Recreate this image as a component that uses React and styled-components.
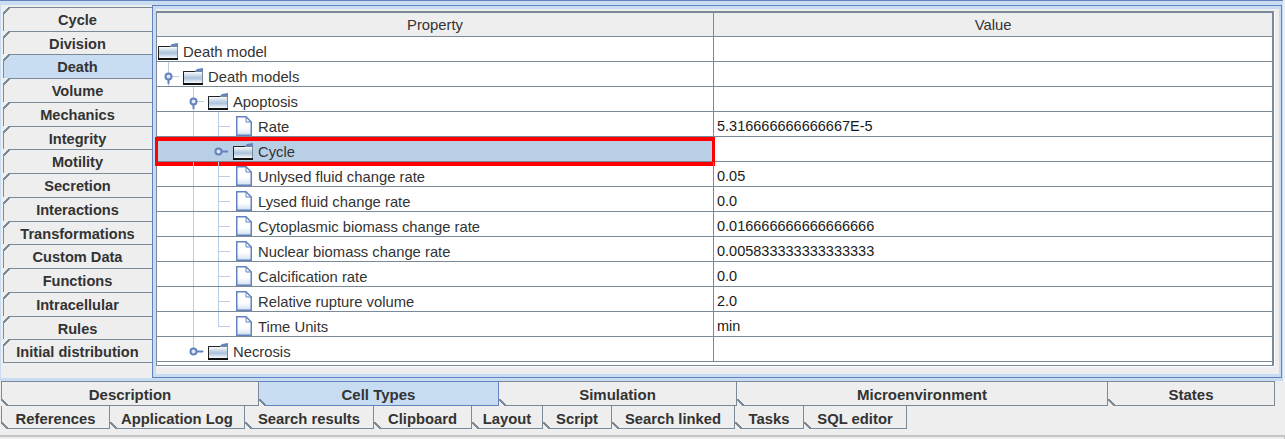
import React from 'react';
import styled, { createGlobalStyle } from 'styled-components';

const LINE = '#7a8a99';
const BLUE = '#6382bf';
const PALE = '#b8cfe5';
const TINT = '#c8ddf2';
const BG = '#eeeeee';

const GlobalStyle = createGlobalStyle`
    html, body {
        margin: 0;
        padding: 0;
        background: ${BG};
    }
    body {
        font-family: "Liberation Sans", Arial, sans-serif;
        font-size: 14.8px;
        color: #333333;
    }
`;

const Shell = styled.div`
    width: 1285px;
    height: 439px;
    overflow: hidden;
    display: flex;
    flex-direction: column;
    background: ${BG};
`;

const TopFrame = styled.div`
    box-sizing: border-box;
    width: 1283px;
    height: 381px;
    flex: none;
    padding: 4px 3px 3px 1px;
    display: flex;
    background: ${TINT};
    border-top: 1px solid ${BLUE};
`;

const SideColumn = styled.div`
    box-sizing: border-box;
    width: 151px;
    flex: none;
    padding: 2px 0 0 2px;
    background: ${BG};
`;

const SideTab = styled.div`
    box-sizing: border-box;
    position: relative;
    height: ${p => p.$height}px;
    padding-right: 1px;
    padding-top: ${p => (p.$height === 23 || p.$last ? 1 : 0)}px;
    display: flex;
    align-items: center;
    justify-content: center;
    font-size: 14.6px;
    font-weight: bold;
    border-top: 1px solid ${LINE};
    border-left: 1px solid ${LINE};
    border-bottom: ${p => (p.$last ? `1px solid ${LINE}` : 'none')};
    background: ${p => (p.$active ? TINT : BG)};

    &::before {
        content: '';
        position: absolute;
        left: -1px;
        top: -1px;
        width: 7px;
        height: 7px;
        background: linear-gradient(135deg, ${BG} 0 42%, ${LINE} 42% 58%, transparent 58%);
    }
`;

const ContentPanel = styled.div`
    box-sizing: border-box;
    flex: 1;
    display: flex;
    border: 1px solid ${BLUE};
    padding: 3px 0 3px 0;
    background: ${TINT};
`;

const ContentInner = styled.div`
    flex: 1;
    display: flex;
    padding: 2px 5px 9px 3px;
    background: linear-gradient(to right, ${TINT} 3px, ${BG} 3px);
    border-right: 2px solid ${TINT};
`;

const ScrollPane = styled.div`
    box-sizing: border-box;
    width: 1118px;
    height: 355px;
    background: #ffffff;
    border-top: 2px solid ${LINE};
    border-left: 1px solid ${LINE};
    border-right: 2px solid ${LINE};
    border-bottom: 1px solid ${LINE};
    box-shadow: 1px 1px 0 #ffffff;
`;

const HeaderRow = styled.div`
    display: grid;
    grid-template-columns: 557px 1fr;
    height: 23px;
    background: ${BG};
    border-bottom: 1px solid ${LINE};
`;

const HeaderCell = styled.div`
    display: flex;
    align-items: center;
    justify-content: center;
    font-size: 14.8px;
    border-right: ${p => (p.$first ? `1px solid ${LINE}` : 'none')};
`;

const Row = styled.div`
    display: grid;
    grid-template-columns: 557px 1fr;
    height: 24px;
    border-bottom: 1px solid ${LINE};
`;

const TreeCell = styled.div`
    position: relative;
    display: flex;
    height: 24px;
    border-right: 1px solid ${LINE};
    background: ${p => (p.$selected ? PALE : 'transparent')};
`;

const Highlight = styled.div`
    position: absolute;
    box-sizing: border-box;
    left: -2px;
    top: 0;
    width: 560px;
    height: 29px;
    border: solid #ff0000;
    border-width: 4px 3px;
`;

const Connector = styled.svg`
    display: block;
    flex: none;
`;

const NodeIcon = styled.svg`
    display: block;
    flex: none;
    margin-top: ${p => (p.$leaf ? 4 : 6)}px;
`;

const NodeLabel = styled.span`
    margin-left: ${p => (p.$leaf ? 6 : 5)}px;
    line-height: 16px;
    padding-top: 7px;
    white-space: nowrap;
`;

const ValueCell = styled.div`
    padding: 6px 0 0 3px;
    line-height: 16px;
    font-size: 14.5px;
    color: #1a1a1a;
`;

const TabRow = styled.div`
    display: flex;
    height: ${p => p.$height}px;
    padding-left: 1px;
    flex: none;
`;

const MainTab = styled.div`
    box-sizing: border-box;
    position: relative;
    width: ${p => p.$width}px;
    padding-top: 2px;
    display: flex;
    align-items: center;
    justify-content: center;
    font-size: 15px;
    font-weight: bold;
    border-top: 1px solid ${p => (p.$active ? BLUE : LINE)};
    border-bottom: 1px solid ${p => (p.$active ? BLUE : LINE)};
    border-right: 1px solid ${p => (p.$active ? BLUE : LINE)};
    border-left: ${p => (p.$first ? `1px solid ${LINE}` : 'none')};
    background: ${p => (p.$active ? TINT : BG)};

    &::before {
        content: '';
        position: absolute;
        left: ${p => (p.$first ? -1 : 0)}px;
        bottom: -1px;
        width: 7px;
        height: 7px;
        background: linear-gradient(45deg, ${BG} 0 42%, ${LINE} 42% 58%, transparent 58%);
    }
`;

const SubTab = styled(MainTab)`
    border-top: none;
    padding-top: 4px;
    font-size: 14.8px;
`;

const StatusBar = styled.div`
    margin-top: 6px;
    flex: 1;
    border-top: 2px solid #c4c4c4;
    border-right: 1px solid #c4c4c4;
`;

const sideTabs = [
    'Cycle', 'Division', 'Death', 'Volume', 'Mechanics', 'Integrity', 'Motility', 'Secretion',
    'Interactions', 'Transformations', 'Custom Data', 'Functions', 'Intracellular', 'Rules', 'Initial distribution',
];

const mainTabs = [
    { label: 'Description', width: 258 },
    { label: 'Cell Types', width: 240, active: true },
    { label: 'Simulation', width: 238 },
    { label: 'Microenvironment', width: 371 },
    { label: 'States', width: 167 },
];

const subTabs = [
    { label: 'References', width: 109 },
    { label: 'Application Log', width: 135 },
    { label: 'Search results', width: 129 },
    { label: 'Clipboard', width: 98 },
    { label: 'Layout', width: 71 },
    { label: 'Script', width: 69 },
    { label: 'Search linked', width: 123 },
    { label: 'Tasks', width: 69 },
    { label: 'SQL editor', width: 103 },
];

// lines: vertical guides as [x, y1, y2], hook: leaf connector, handle: expander
const leafRow = (label, value, last) => ({
    label,
    value,
    width: 79,
    leaf: true,
    lines: [[36, 0, 25], [61, 0, last ? 15 : 25]],
    hook: true,
});

const rows = [
    { label: 'Death model', value: '', width: 1 },
    { label: 'Death models', value: '', width: 26, lines: [[11, 0, 24]], handle: { x: 11, open: true } },
    { label: 'Apoptosis', value: '', width: 51, lines: [[36, 0, 25]], handle: { x: 36, open: true } },
    leafRow('Rate', '5.316666666666667E-5'),
    { label: 'Cycle', value: '', width: 76, lines: [[36, 0, 25], [61, 0, 25]], handle: { x: 61 }, selected: true },
    leafRow('Unlysed fluid change rate', '0.05'),
    leafRow('Lysed fluid change rate', '0.0'),
    leafRow('Cytoplasmic biomass change rate', '0.016666666666666666'),
    leafRow('Nuclear biomass change rate', '0.005833333333333333'),
    leafRow('Calcification rate', '0.0'),
    leafRow('Relative rupture volume', '2.0'),
    leafRow('Time Units', 'min', true),
    { label: 'Necrosis', value: '', width: 51, lines: [[36, 0, 15]], handle: { x: 36 } },
];

const FolderIcon = () => (
    <NodeIcon width="20" height="17" viewBox="0 0 20 17">
        <defs>
            <linearGradient id="folderFill" x1="0" y1="0" x2="0" y2="1">
                <stop offset="0" stopColor="#ffffff" />
                <stop offset="0.55" stopColor="#a9c2dc" />
                <stop offset="1" stopColor="#ffffff" />
            </linearGradient>
        </defs>
        <path d="M12 3 L14 1 L20 0 L20 3 Z" fill={BLUE} />
        <rect x="0.5" y="3.5" width="19" height="12" fill="url(#folderFill)" stroke={LINE} />
        <path d="M0.5 15.5 V3.5 H12" fill="none" stroke="#222222" />
        <rect x="0" y="15" width="20" height="2" fill="#111111" />
    </NodeIcon>
);

const LeafIcon = () => (
    <NodeIcon $leaf width="16" height="20" viewBox="0 0 16 20">
        <defs>
            <linearGradient id="leafFill" x1="0" y1="0" x2="0" y2="1">
                <stop offset="0" stopColor="#ffffff" />
                <stop offset="0.6" stopColor="#ffffff" />
                <stop offset="1" stopColor="#cfdff0" />
            </linearGradient>
        </defs>
        <path d="M0.75 0.75 H10 L15.25 6 V19.25 H0.75 Z" fill="url(#leafFill)" stroke={BLUE} strokeWidth="1.5" />
        <path d="M10 0.75 V6 H15.25" fill="none" stroke={BLUE} />
    </NodeIcon>
);

const Guides = ({ row }) => {
    const cy = 15;
    const { lines = [], hook, handle } = row;
    return (
        <Connector width={row.width} height="24" viewBox={`0 0 ${row.width} 24`}>
            {lines.map(([x, y1, y2]) => (
                <line key={x} x1={x + 0.5} y1={y1} x2={x + 0.5} y2={y2} stroke={PALE} />
            ))}
            {hook && <line x1="61" y1={cy - 0.5} x2="73" y2={cy - 0.5} stroke={PALE} />}
            {handle && (
                <g>
                    <line x1={handle.x} y1={cy - 0.5} x2={handle.x + 11} y2={cy - 0.5} stroke={PALE} />
                    {handle.open
                        ? <line x1={handle.x + 0.5} y1={cy} x2={handle.x + 0.5} y2={cy + 7} stroke={BLUE} strokeWidth="2" />
                        : <line x1={handle.x} y1={cy - 0.5} x2={handle.x + 10} y2={cy - 0.5} stroke={BLUE} strokeWidth="2" />}
                    <circle cx={handle.x + 0.5} cy={cy - 0.5} r="3" fill="#dfe8f4" stroke={BLUE} strokeWidth="2" />
                </g>
            )}
        </Connector>
    );
};

const App = () => (
    <Shell>
        <GlobalStyle />
        <TopFrame>
            <SideColumn>
                {sideTabs.map((name, i) => (
                    <SideTab
                        key={name}
                        $height={i % 4 === 1 ? 23 : 24}
                        $active={name === 'Death'}
                        $last={i === sideTabs.length - 1}
                    >
                        {name}
                    </SideTab>
                ))}
            </SideColumn>
            <ContentPanel>
                <ContentInner>
                    <ScrollPane>
                        <HeaderRow>
                            <HeaderCell $first>Property</HeaderCell>
                            <HeaderCell>Value</HeaderCell>
                        </HeaderRow>
                        {rows.map(row => (
                            <Row key={row.label}>
                                <TreeCell $selected={row.selected}>
                                    <Guides row={row} />
                                    {row.leaf ? <LeafIcon /> : <FolderIcon />}
                                    <NodeLabel $leaf={row.leaf}>{row.label}</NodeLabel>
                                    {row.selected && <Highlight />}
                                </TreeCell>
                                <ValueCell>{row.value}</ValueCell>
                            </Row>
                        ))}
                    </ScrollPane>
                </ContentInner>
            </ContentPanel>
        </TopFrame>
        <TabRow $height={25}>
            {mainTabs.map((tab, i) => (
                <MainTab key={tab.label} $width={tab.width} $active={tab.active} $first={i === 0}>
                    {tab.label}
                </MainTab>
            ))}
        </TabRow>
        <TabRow $height={23}>
            {subTabs.map((tab, i) => (
                <SubTab key={tab.label} $width={tab.width} $first={i === 0}>
                    {tab.label}
                </SubTab>
            ))}
        </TabRow>
        <StatusBar />
    </Shell>
);

export default App;
